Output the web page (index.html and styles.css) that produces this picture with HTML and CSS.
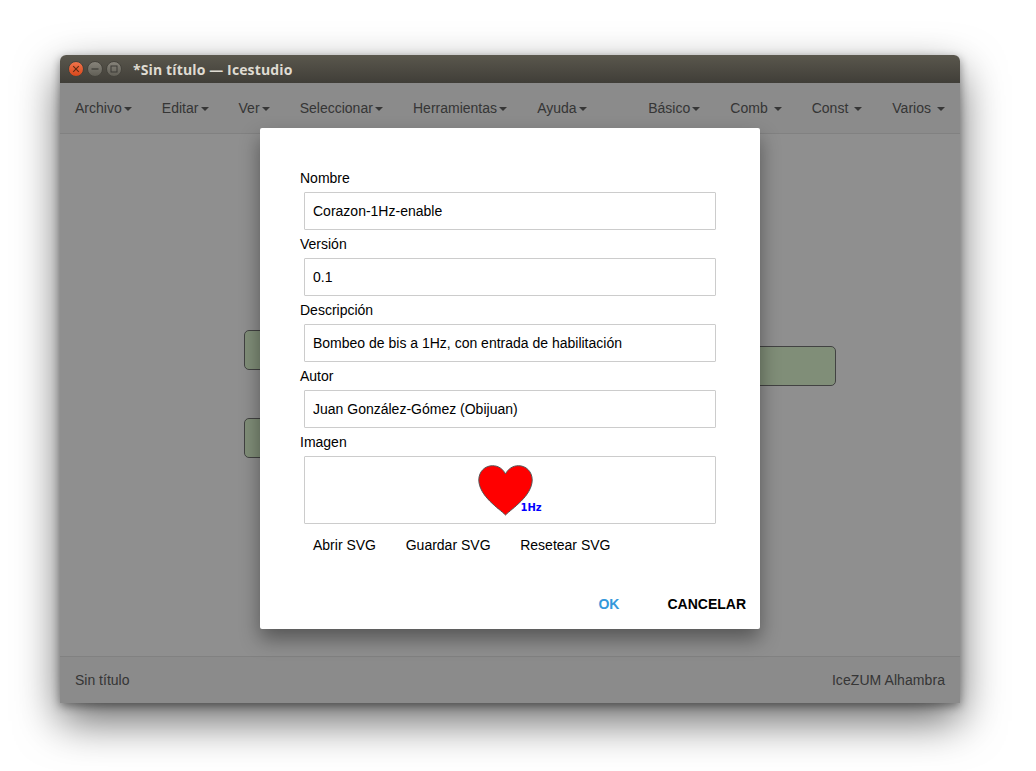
FILE: index.html
```html
<!DOCTYPE html>
<html lang="en">
<head>
    <meta charset="UTF-8">
    <title>Icestudio</title>
    <link rel="stylesheet" href="styles.css">
</head>
<body>
    <div class="window">
        <div class="titlebar">
            <div class="win-buttons">
                <span class="win-btn close">
                    <svg width="8" height="8" viewBox="0 0 8 8"><path d="M1.2 1.2L6.8 6.8M6.8 1.2L1.2 6.8" stroke="#5e2a12" stroke-width="1.1"/></svg>
                </span>
                <span class="win-btn">
                    <svg width="8" height="8" viewBox="0 0 8 8"><path d="M0.5 4H7.5" stroke="#3c3b37" stroke-width="1.2"/></svg>
                </span>
                <span class="win-btn">
                    <svg width="8" height="8" viewBox="0 0 8 8"><rect x="1" y="1" width="6" height="6" fill="none" stroke="#3c3b37" stroke-width="1"/></svg>
                </span>
            </div>
            <span class="win-title">*Sin título — Icestudio</span>
        </div>

        <div class="app">
            <nav class="navbar">
                <ul class="menu">
                    <li>Archivo<span class="caret"></span></li>
                    <li>Editar<span class="caret"></span></li>
                    <li>Ver<span class="caret"></span></li>
                    <li>Seleccionar<span class="caret"></span></li>
                    <li>Herramientas<span class="caret"></span></li>
                    <li>Ayuda<span class="caret"></span></li>
                </ul>
                <ul class="menu">
                    <li>Básico<span class="caret"></span></li>
                    <li>Comb <span class="caret"></span></li>
                    <li>Const <span class="caret"></span></li>
                    <li>Varios <span class="caret"></span></li>
                </ul>
            </nav>

            <main class="canvas">
                <div class="block block-a"></div>
                <div class="block block-b"></div>
                <div class="block block-c"></div>
            </main>

            <footer class="statusbar">
                <span>Sin título</span>
                <span class="board-name">IceZUM Alhambra</span>
            </footer>

            <div class="overlay">
                <div class="modal">
                    <form class="form">
                        <label class="field-label">Nombre</label>
                        <input class="field-input" type="text" value="Corazon-1Hz-enable">
                        <label class="field-label">Versión</label>
                        <input class="field-input" type="text" value="0.1">
                        <label class="field-label">Descripción</label>
                        <input class="field-input" type="text" value="Bombeo de bis a 1Hz, con entrada de habilitación">
                        <label class="field-label">Autor</label>
                        <input class="field-input" type="text" value="Juan González-Gómez (Obijuan)">
                        <label class="field-label">Imagen</label>
                        <div class="image-box">
                            <svg class="heart" width="66" height="54" viewBox="0 0 66 54">
                                <path d="M27.5 50C21 43.5 1 31 0.8 15C0.8 6.5 7 0.7 14.5 0.7C20.5 0.7 25 4 27.5 9C30 4 34.5 0.7 40.5 0.7C48 0.7 54.2 6.5 54.2 15C54 31 34 43.5 27.5 50Z" fill="#ff0000" stroke="#555" stroke-width="1"/>
                                <text class="heart-label" x="42.5" y="46">1Hz</text>
                            </svg>
                        </div>
                        <div class="image-actions">
                            <span>Abrir SVG</span>
                            <span>Guardar SVG</span>
                            <span>Resetear SVG</span>
                        </div>
                    </form>
                    <div class="modal-footer">
                        <span class="btn-ok">OK</span>
                        <span class="btn-cancel">CANCELAR</span>
                    </div>
                </div>
            </div>
        </div>
    </div>
</body>
</html>
```

FILE: styles.css
```css
* {
    box-sizing: border-box;
}

html, body {
    height: 100%;
}

body {
    margin: 0;
    padding: 55px 76px 68px 60px;
    background-color: #fff;
    font-family: 'Liberation Sans', Arial, sans-serif;
    font-size: 14px;
    color: #000;
    overflow: hidden;
}

.window {
    display: flex;
    flex-direction: column;
    width: 900px;
    height: 648px;
    border-radius: 6px 6px 0 0;
    box-shadow: 0 18px 44px rgba(0, 0, 0, 0.6), 0 3px 10px rgba(0, 0, 0, 0.4);
}

.titlebar {
    display: flex;
    align-items: center;
    height: 28px;
    padding-left: 8px;
    border-radius: 6px 6px 0 0;
    background: linear-gradient(#5a574d, #403e38);
}

.win-buttons {
    display: flex;
    gap: 3px;
}

.win-btn {
    display: flex;
    align-items: center;
    justify-content: center;
    width: 16px;
    height: 16px;
    border-radius: 50%;
    border: 1px solid #45433c;
    background: linear-gradient(#86837a, #615f56);
}

.win-btn.close {
    background: linear-gradient(#f0734a, #d9481c);
}

.win-title {
    margin-left: 11px;
    font-family: 'Open Sans', sans-serif;
    font-size: 14px;
    font-weight: 700;
    letter-spacing: 0.13px;
    color: #dfdbd2;
}

.app {
    position: relative;
    flex: 1;
    display: flex;
    flex-direction: column;
}

.navbar {
    display: flex;
    justify-content: space-between;
    height: 51px;
    background-color: #f8f8f8;
    border-bottom: 1px solid #e7e7e7;
}

.menu {
    display: flex;
    margin: 0;
    padding: 0;
    list-style: none;
}

.menu li {
    padding: 0 15px;
    line-height: 50px;
    color: #606060;
    white-space: pre;
}

.caret {
    display: inline-block;
    margin-left: 2.15px;
    vertical-align: middle;
    border-top: 4px solid #606060;
    border-left: 4px solid transparent;
    border-right: 4px solid transparent;
}

.canvas {
    position: relative;
    flex: 1;
    background-color: #fff;
}

/* blocks sit on the free canvas, mostly hidden by the modal */
.block {
    position: absolute;
    border: 1px solid #777;
    border-radius: 5px;
    background-color: #e4fed6;
}

.block-a {
    left: 184px;
    top: 196px;
    width: 120px;
    height: 40px;
}

.block-b {
    left: 184px;
    top: 284px;
    width: 120px;
    height: 40px;
}

.block-c {
    left: 616px;
    top: 212px;
    width: 160px;
    height: 40px;
}

.statusbar {
    display: flex;
    justify-content: space-between;
    align-items: center;
    height: 47px;
    padding: 0 15px;
    background-color: #f8f8f8;
    border-top: 1px solid #e7e7e7;
    color: #606060;
}

.board-name {
    letter-spacing: 0.07px;
}

.overlay {
    position: absolute;
    inset: 0;
    display: flex;
    justify-content: center;
    align-items: flex-start;
    padding-top: 45px;
    background-color: rgba(0, 0, 0, 0.44);
}

.modal {
    width: 500px;
    height: 501px;
    padding-top: 36px;
    border-radius: 2px;
    background-color: #fff;
    box-shadow: 0 10px 20px rgba(0, 0, 0, 0.4);
}

.form {
    display: flex;
    flex-direction: column;
    padding: 0 40px;
}

.field-label {
    height: 28px;
    line-height: 28px;
}

.field-input {
    width: 412px;
    height: 38px;
    margin-left: 4px;
    padding: 0 8px;
    border: 1px solid #ccc;
    border-radius: 1px;
    font-family: inherit;
    font-size: 14px;
    color: #000;
}

.image-box {
    display: flex;
    justify-content: center;
    width: 412px;
    height: 68px;
    margin-left: 4px;
    padding: 8px 0 0 2px;
    border: 1px solid #ccc;
    border-radius: 1px;
}

.heart-label {
    font-family: 'DejaVu Sans', sans-serif;
    font-size: 10px;
    font-weight: 700;
    fill: #0000ff;
}

.image-actions {
    display: flex;
    gap: 29.7px;
    margin: 12px 0 0 13px;
    line-height: 18px;
}

.modal-footer {
    display: flex;
    justify-content: flex-end;
    gap: 48px;
    margin-top: 41px;
    padding-right: 14px;
    font-weight: 700;
    line-height: 18px;
}

.btn-ok {
    color: #3498db;
}
```
